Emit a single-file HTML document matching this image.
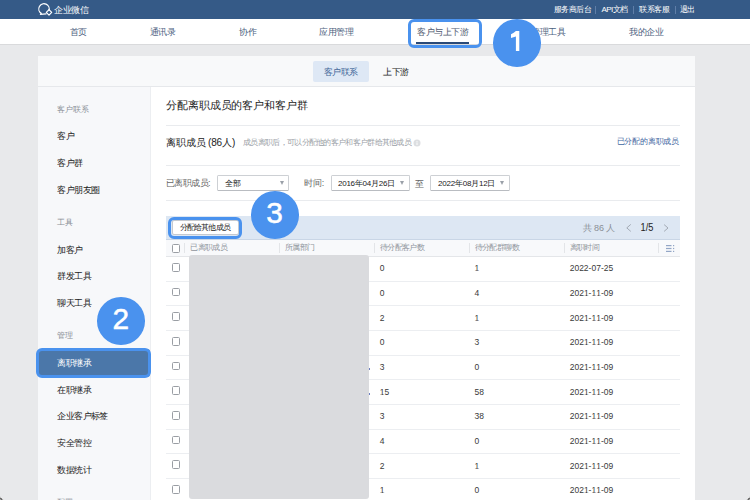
<!DOCTYPE html>
<html><head><meta charset="utf-8">
<style>
*{margin:0;padding:0;box-sizing:border-box}
html,body{width:750px;height:500px;overflow:hidden}
body{position:relative;background:#e8e9eb;font-family:"Liberation Sans",sans-serif;color:#333}
.a{position:absolute}
.t{position:absolute;white-space:nowrap;line-height:1;transform-origin:0 0}
.hl{position:absolute;border:3.1px solid #4a92ee;border-radius:6px}
.circ{position:absolute;width:47.7px;height:47.7px;border-radius:50%;background:#4a92ee}
.arr{position:absolute;width:0;height:0;border-left:2.5px solid transparent;border-right:2.5px solid transparent;border-top:4px solid #9aa0a8}
.one{display:inline-block;clip-path:polygon(0 0,100% 0,100% 78%,61% 78%,61% 100%,44% 100%,44% 78%,0 78%)}
.cb{position:absolute;left:172px;width:8px;height:8.8px;border:1px solid #9a9ea4;border-radius:1.5px;background:#fff}
</style></head><body>
<div class="a" style="left:0px;top:0px;width:750px;height:18.5px;background:#355a87;"></div>
<svg class="a" style="left:34px;top:1px" width="24" height="17" viewBox="0 0 24 17">
<path d="M14.9 9.6A5.2 5.2 0 1 0 7.2 12.3L6.4 13.3L12.1 12.9" stroke="#fff" stroke-width="1.2" fill="none" stroke-linecap="round" stroke-linejoin="round"/>
<path d="M15 8.7L17.7 11.4L15 14.1L12.3 11.4Z" stroke="#fff" stroke-width="1.2" fill="none" stroke-linejoin="round"/>
</svg>
<div class="t" style="left:54px;top:5.5px;font-size:9px;letter-spacing:-0.35px;color:#fff;font-weight:500">企业微信</div>
<div class="t" style="left:554px;top:6.2px;font-size:8px;letter-spacing:-0.6px;color:#fff;">服务商后台</div>
<div class="t" style="left:601.6px;top:6.2px;font-size:8px;letter-spacing:-0.6px;color:#fff;">API文档</div>
<div class="t" style="left:639.4px;top:6.2px;font-size:8px;letter-spacing:-0.6px;color:#fff;">联系客服</div>
<div class="t" style="left:680px;top:6.2px;font-size:8px;letter-spacing:-0.6px;color:#fff;">退出</div>
<div class="a" style="left:595.4px;top:6px;width:0.8px;height:7.7px;background:#5f7ea8;"></div>
<div class="a" style="left:633px;top:6px;width:0.8px;height:7.7px;background:#5f7ea8;"></div>
<div class="a" style="left:675px;top:6px;width:0.8px;height:7.7px;background:#5f7ea8;"></div>
<div class="a" style="left:0px;top:18.5px;width:750px;height:25.5px;background:#fff;"></div>
<div class="a" style="left:0px;top:44px;width:750px;height:1px;background:#d9dadc;"></div>
<div class="t" style="left:69.8px;top:28px;font-size:9px;letter-spacing:-0.5px;color:#4d5f80;">首页</div>
<div class="t" style="left:149.8px;top:28px;font-size:9px;letter-spacing:-0.5px;color:#4d5f80;">通讯录</div>
<div class="t" style="left:239.2px;top:28px;font-size:9px;letter-spacing:-0.5px;color:#4d5f80;">协作</div>
<div class="t" style="left:319.2px;top:28px;font-size:9px;letter-spacing:-0.5px;color:#4d5f80;">应用管理</div>
<div class="t" style="left:531px;top:28px;font-size:9px;letter-spacing:-0.5px;color:#4d5f80;">管理工具</div>
<div class="t" style="left:629.2px;top:28px;font-size:9px;letter-spacing:-0.5px;color:#4d5f80;">我的企业</div>
<div class="t" style="left:417px;top:27.5px;font-size:9px;letter-spacing:-0.5px;color:#505a70;">客户与上下游</div>
<div class="a" style="left:416px;top:42px;width:53px;height:1.8px;background:#2a4a78;"></div>
<div class="a" style="left:38px;top:56px;width:657px;height:460px;background:#fff;"></div>
<div class="a" style="left:38px;top:56px;width:657px;height:30.5px;background:#f8f9fa;border-bottom:1px solid #e6e8eb"></div>
<div class="a" style="left:313px;top:60.8px;width:56px;height:20.8px;background:#dee8f5;border-radius:2px"></div>
<div class="t" style="left:323.6px;top:67.6px;font-size:9px;letter-spacing:-0.4px;color:#45689a;">客户联系</div>
<div class="t" style="left:383px;top:67.6px;font-size:9px;letter-spacing:-0.4px;color:#222;">上下游</div>
<div class="a" style="left:38px;top:87px;width:113px;height:420px;background:#f7f8fa;border-right:1px solid #eceef1"></div>
<div class="t" style="left:57.4px;top:105.6px;font-size:8px;letter-spacing:-0.1px;color:#8a8f96;">客户联系</div>
<div class="t" style="left:57.4px;top:218.7px;font-size:8px;letter-spacing:-0.1px;color:#8a8f96;">工具</div>
<div class="t" style="left:57.4px;top:332.3px;font-size:8px;letter-spacing:-0.1px;color:#8a8f96;">管理</div>
<div class="t" style="left:57.4px;top:499px;font-size:8px;letter-spacing:-0.1px;color:#8a8f96;">配置</div>
<div class="t" style="left:57.4px;top:132.25px;font-size:9px;letter-spacing:-0.6px;color:#222;">客户</div>
<div class="t" style="left:57.4px;top:159px;font-size:9px;letter-spacing:-0.6px;color:#222;">客户群</div>
<div class="t" style="left:57.4px;top:185.7px;font-size:9px;letter-spacing:-0.6px;color:#222;">客户朋友圈</div>
<div class="t" style="left:57.4px;top:245.6px;font-size:9px;letter-spacing:-0.6px;color:#222;">加客户</div>
<div class="t" style="left:57.4px;top:272px;font-size:9px;letter-spacing:-0.6px;color:#222;">群发工具</div>
<div class="t" style="left:57.4px;top:298.6px;font-size:9px;letter-spacing:-0.6px;color:#222;">聊天工具</div>
<div class="t" style="left:57.4px;top:385.8px;font-size:9px;letter-spacing:-0.6px;color:#222;">在职继承</div>
<div class="t" style="left:57.4px;top:412px;font-size:9px;letter-spacing:-0.6px;color:#222;">企业客户标签</div>
<div class="t" style="left:57.4px;top:439px;font-size:9px;letter-spacing:-0.6px;color:#222;">安全管控</div>
<div class="t" style="left:57.4px;top:465.7px;font-size:9px;letter-spacing:-0.6px;color:#222;">数据统计</div>
<div class="a" style="left:38px;top:349px;width:112px;height:28px;background:#4b77a9;border-radius:3px"></div>
<div class="t" style="left:57.4px;top:358.6px;font-size:9px;letter-spacing:-0.6px;color:#fff;">离职继承</div>
<div class="t" style="left:166px;top:100px;font-size:11px;letter-spacing:-0.1px;color:#222;">分配离职成员的客户和客户群</div>
<div class="a" style="left:166px;top:125px;width:514px;height:1px;background:#e9ebee;"></div>
<div class="t" style="left:166px;top:138.3px;font-size:10px;letter-spacing:-0.15px;color:#222;">离职成员 (86人)</div>
<div class="t" style="left:243.2px;top:139px;font-size:8px;letter-spacing:-0.7px;color:#9aa0a6;">成员离职后，可以分配他的客户和客户群给其他成员</div>
<svg class="a" style="left:413px;top:139px" width="8" height="8" viewBox="0 0 8 8"><circle cx="4" cy="4" r="3.5" fill="#dcdee1"/><rect x="3.55" y="3.4" width="0.9" height="2.6" fill="#fff"/><rect x="3.55" y="2" width="0.9" height="0.9" fill="#fff"/></svg>
<div class="t" style="left:616.7px;top:138.3px;font-size:8px;letter-spacing:-0.2px;color:#3d64a0;">已分配的离职成员</div>
<div class="a" style="left:166px;top:165px;width:514px;height:1px;background:#e9ebee;"></div>
<div class="t" style="left:166px;top:179px;font-size:9px;letter-spacing:-0.6px;color:#666;">已离职成员:</div>
<div class="a" style="left:217.2px;top:175.2px;width:72.1px;height:15.4px;background:#fff;border:1px solid #cdd0d4;border-bottom-color:#b9bcc1;border-radius:1.5px"></div>
<div class="t" style="left:225px;top:179.6px;font-size:8px;letter-spacing:-0.4px;color:#222;">全部</div>
<div class="arr" style="left:280px;top:181px"></div>
<div class="t" style="left:304.4px;top:179px;font-size:9px;letter-spacing:-0.3px;color:#666;">时间:</div>
<div class="a" style="left:331px;top:175.2px;width:78.5px;height:15.4px;background:#fff;border:1px solid #cdd0d4;border-bottom-color:#b9bcc1;border-radius:1.5px"></div>
<div class="t" style="left:338px;top:180px;font-size:8px;letter-spacing:-0.25px;color:#222;">20<span class="one">1</span>6年04月26日</div>
<div class="arr" style="left:400px;top:181px"></div>
<div class="t" style="left:415.3px;top:179.5px;font-size:9px;letter-spacing:0px;color:#666;">至</div>
<div class="a" style="left:430.2px;top:175.2px;width:79.6px;height:15.4px;background:#fff;border:1px solid #cdd0d4;border-bottom-color:#b9bcc1;border-radius:1.5px"></div>
<div class="t" style="left:437.9px;top:180px;font-size:8px;letter-spacing:-0.2px;color:#222;">2022年08月<span class="one">1</span>2日</div>
<div class="arr" style="left:500px;top:181px"></div>
<div class="a" style="left:166px;top:200px;width:514px;height:1px;background:#e9ebee;"></div>
<div class="a" style="left:166px;top:216px;width:514px;height:24px;background:#dde7f3;border-bottom:1px solid #c9d6e6"></div>
<div class="a" style="left:172px;top:220px;width:67px;height:15px;background:#fff;border:1px solid #c5c9cf;border-radius:2px"></div>
<div class="t" style="left:179.6px;top:223.8px;font-size:8px;letter-spacing:-0.8px;color:#222;">分配给其他成员</div>
<div class="t" style="left:582.7px;top:223.8px;font-size:9px;letter-spacing:-0.1px;color:#8a8f96;">共 86 人</div>
<svg class="a" style="left:620px;top:220px" width="55" height="16" viewBox="620 220 55 16"><path d="M630.8 224.4L626.8 227.9L630.8 231.4M664.1 224.6L668 228L664.1 231.4" fill="none" stroke="#9ca3ad" stroke-width="0.9"/></svg>
<div class="t" style="left:640.6px;top:223.2px;font-size:9.3px;letter-spacing:0px;color:#222;transform:scaleY(1.1);"><span class="one">1</span>/5</div>
<div class="a" style="left:166px;top:240px;width:514px;height:16.5px;background:#f8f9fb;border-bottom:1px solid #e4e6e9"></div>
<div class="cb" style="top:244px"></div>
<div class="a" style="left:184px;top:243px;width:1px;height:10px;background:#e3e5e8;"></div>
<div class="a" style="left:278.6px;top:243px;width:1px;height:10px;background:#e3e5e8;"></div>
<div class="a" style="left:373.8px;top:243px;width:1px;height:10px;background:#e3e5e8;"></div>
<div class="a" style="left:468.8px;top:243px;width:1px;height:10px;background:#e3e5e8;"></div>
<div class="a" style="left:563.6px;top:243px;width:1px;height:10px;background:#e3e5e8;"></div>
<div class="a" style="left:658.2px;top:243px;width:1px;height:10px;background:#e3e5e8;"></div>
<div class="t" style="left:190.3px;top:243.9px;font-size:8px;letter-spacing:-0.6px;color:#8f949b;">已离职成员</div>
<div class="t" style="left:284.8px;top:243.9px;font-size:8px;letter-spacing:-0.6px;color:#8f949b;">所属部门</div>
<div class="t" style="left:379.8px;top:243.9px;font-size:8px;letter-spacing:-0.6px;color:#8f949b;">待分配客户数</div>
<div class="t" style="left:474.5px;top:243.9px;font-size:8px;letter-spacing:-0.6px;color:#8f949b;">待分配群聊数</div>
<div class="t" style="left:569.7px;top:243.9px;font-size:8px;letter-spacing:-0.6px;color:#8f949b;">离职时间</div>
<svg class="a" style="left:665.6px;top:245.3px" width="9" height="7" viewBox="0 0 9 7">
<rect x="0" y="0" width="5.5" height="1.2" fill="#93a6c6"/><rect x="0" y="2.9" width="5.5" height="1.2" fill="#93a6c6"/><rect x="0" y="5.8" width="5.5" height="1.2" fill="#93a6c6"/>
<rect x="7" y="0" width="1.2" height="1.2" fill="#93a6c6"/><rect x="7" y="2.9" width="1.2" height="1.2" fill="#93a6c6"/><rect x="7" y="5.8" width="1.2" height="1.2" fill="#93a6c6"/>
</svg>
<div class="cb" style="top:262.8px"></div>
<div class="t" style="left:379.8px;top:263.14px;font-size:8.5px;letter-spacing:0px;color:#3a3a3a;transform:scaleY(1.12);">0</div>
<div class="t" style="left:474.5px;top:263.14px;font-size:8.5px;letter-spacing:0px;color:#3a3a3a;transform:scaleY(1.12);"><span class="one">1</span></div>
<div class="t" style="left:569.7px;top:263.14px;font-size:8.5px;letter-spacing:0px;color:#3a3a3a;transform:scaleY(1.12);">2022-07-25</div>
<div class="a" style="left:166px;top:280.7px;width:514px;height:1px;background:#eceef1;"></div>
<div class="cb" style="top:287.5px"></div>
<div class="t" style="left:379.8px;top:287.82px;font-size:8.5px;letter-spacing:0px;color:#3a3a3a;transform:scaleY(1.12);">0</div>
<div class="t" style="left:474.5px;top:287.82px;font-size:8.5px;letter-spacing:0px;color:#3a3a3a;transform:scaleY(1.12);">4</div>
<div class="t" style="left:569.7px;top:287.82px;font-size:8.5px;letter-spacing:0px;color:#3a3a3a;transform:scaleY(1.12);">202<span class="one">1</span>-<span class="one">1</span><span class="one">1</span>-09</div>
<div class="a" style="left:166px;top:305.4px;width:514px;height:1px;background:#eceef1;"></div>
<div class="cb" style="top:312.2px"></div>
<div class="t" style="left:379.8px;top:312.5px;font-size:8.5px;letter-spacing:0px;color:#3a3a3a;transform:scaleY(1.12);">2</div>
<div class="t" style="left:474.5px;top:312.5px;font-size:8.5px;letter-spacing:0px;color:#3a3a3a;transform:scaleY(1.12);"><span class="one">1</span></div>
<div class="t" style="left:569.7px;top:312.5px;font-size:8.5px;letter-spacing:0px;color:#3a3a3a;transform:scaleY(1.12);">202<span class="one">1</span>-<span class="one">1</span><span class="one">1</span>-09</div>
<div class="a" style="left:166px;top:330.0px;width:514px;height:1px;background:#eceef1;"></div>
<div class="cb" style="top:336.9px"></div>
<div class="t" style="left:379.8px;top:337.18px;font-size:8.5px;letter-spacing:0px;color:#3a3a3a;transform:scaleY(1.12);">0</div>
<div class="t" style="left:474.5px;top:337.18px;font-size:8.5px;letter-spacing:0px;color:#3a3a3a;transform:scaleY(1.12);">3</div>
<div class="t" style="left:569.7px;top:337.18px;font-size:8.5px;letter-spacing:0px;color:#3a3a3a;transform:scaleY(1.12);">202<span class="one">1</span>-<span class="one">1</span><span class="one">1</span>-09</div>
<div class="a" style="left:166px;top:354.7px;width:514px;height:1px;background:#eceef1;"></div>
<div class="cb" style="top:361.6px"></div>
<div class="t" style="left:379.8px;top:361.86px;font-size:8.5px;letter-spacing:0px;color:#3a3a3a;transform:scaleY(1.12);">3</div>
<div class="t" style="left:474.5px;top:361.86px;font-size:8.5px;letter-spacing:0px;color:#3a3a3a;transform:scaleY(1.12);">0</div>
<div class="t" style="left:569.7px;top:361.86px;font-size:8.5px;letter-spacing:0px;color:#3a3a3a;transform:scaleY(1.12);">202<span class="one">1</span>-<span class="one">1</span><span class="one">1</span>-09</div>
<div class="a" style="left:166px;top:379.4px;width:514px;height:1px;background:#eceef1;"></div>
<div class="cb" style="top:386.2px"></div>
<div class="t" style="left:379.8px;top:386.54px;font-size:8.5px;letter-spacing:0px;color:#3a3a3a;transform:scaleY(1.12);"><span class="one">1</span>5</div>
<div class="t" style="left:474.5px;top:386.54px;font-size:8.5px;letter-spacing:0px;color:#3a3a3a;transform:scaleY(1.12);">58</div>
<div class="t" style="left:569.7px;top:386.54px;font-size:8.5px;letter-spacing:0px;color:#3a3a3a;transform:scaleY(1.12);">202<span class="one">1</span>-<span class="one">1</span><span class="one">1</span>-09</div>
<div class="a" style="left:166px;top:404.1px;width:514px;height:1px;background:#eceef1;"></div>
<div class="cb" style="top:410.9px"></div>
<div class="t" style="left:379.8px;top:411.22px;font-size:8.5px;letter-spacing:0px;color:#3a3a3a;transform:scaleY(1.12);">3</div>
<div class="t" style="left:474.5px;top:411.22px;font-size:8.5px;letter-spacing:0px;color:#3a3a3a;transform:scaleY(1.12);">38</div>
<div class="t" style="left:569.7px;top:411.22px;font-size:8.5px;letter-spacing:0px;color:#3a3a3a;transform:scaleY(1.12);">202<span class="one">1</span>-<span class="one">1</span><span class="one">1</span>-09</div>
<div class="a" style="left:166px;top:428.8px;width:514px;height:1px;background:#eceef1;"></div>
<div class="cb" style="top:435.6px"></div>
<div class="t" style="left:379.8px;top:435.9px;font-size:8.5px;letter-spacing:0px;color:#3a3a3a;transform:scaleY(1.12);">4</div>
<div class="t" style="left:474.5px;top:435.9px;font-size:8.5px;letter-spacing:0px;color:#3a3a3a;transform:scaleY(1.12);">0</div>
<div class="t" style="left:569.7px;top:435.9px;font-size:8.5px;letter-spacing:0px;color:#3a3a3a;transform:scaleY(1.12);">202<span class="one">1</span>-<span class="one">1</span><span class="one">1</span>-09</div>
<div class="a" style="left:166px;top:453.4px;width:514px;height:1px;background:#eceef1;"></div>
<div class="cb" style="top:460.3px"></div>
<div class="t" style="left:379.8px;top:460.58px;font-size:8.5px;letter-spacing:0px;color:#3a3a3a;transform:scaleY(1.12);">2</div>
<div class="t" style="left:474.5px;top:460.58px;font-size:8.5px;letter-spacing:0px;color:#3a3a3a;transform:scaleY(1.12);"><span class="one">1</span></div>
<div class="t" style="left:569.7px;top:460.58px;font-size:8.5px;letter-spacing:0px;color:#3a3a3a;transform:scaleY(1.12);">202<span class="one">1</span>-<span class="one">1</span><span class="one">1</span>-09</div>
<div class="a" style="left:166px;top:478.1px;width:514px;height:1px;background:#eceef1;"></div>
<div class="cb" style="top:485.0px"></div>
<div class="t" style="left:379.8px;top:485.26px;font-size:8.5px;letter-spacing:0px;color:#3a3a3a;transform:scaleY(1.12);"><span class="one">1</span></div>
<div class="t" style="left:474.5px;top:485.26px;font-size:8.5px;letter-spacing:0px;color:#3a3a3a;transform:scaleY(1.12);">0</div>
<div class="t" style="left:569.7px;top:485.26px;font-size:8.5px;letter-spacing:0px;color:#3a3a3a;transform:scaleY(1.12);">202<span class="one">1</span>-<span class="one">1</span><span class="one">1</span>-09</div>
<div class="a" style="left:166px;top:502.8px;width:514px;height:1px;background:#eceef1;"></div>
<div class="a" style="left:189px;top:255.2px;width:180px;height:244.3px;background:#dadbde;border-radius:3px"></div>
<div class="a" style="left:369px;top:368px;width:1.2px;height:1.5px;background:#6d7fc0"></div>
<div class="a" style="left:369px;top:393px;width:1.2px;height:1.5px;background:#6d7fc0"></div>
<svg class="a" style="left:0;top:0" width="750" height="500"><path d="M0 496.5L1.5 498.2L3.8 500H0Z" fill="#000" stroke="#fff" stroke-width="0.8"/><path d="M750 496.5L748.5 498.2L746.2 500H750Z" fill="#000" stroke="#fff" stroke-width="0.8"/></svg>
<div class="hl" style="left:408px;top:18.9px;width:73.8px;height:28.9px"></div>
<div class="hl" style="left:36.1px;top:348.1px;width:114.6px;height:29.7px"></div>
<div class="hl" style="left:168px;top:216.8px;width:74px;height:22px"></div>
<div class="circ" style="left:493.15px;top:19.15px"></div>
<div class="circ" style="left:97.15px;top:297.05px"></div>
<div class="circ" style="left:251.05px;top:191.05px"></div>
<svg class="a" style="left:0;top:0" width="750" height="500"><path d="M515.9 31.1H519.3V50.9H515.9V36.4L511 37.9V34.3Q514 33 515.9 31.1Z" fill="#fff"/></svg>
<div class="t" style="left:112.6px;top:304.1px;font-size:29.8px;letter-spacing:0px;color:#fff;-webkit-text-stroke:0.5px #fff">2</div>
<div class="t" style="left:266.3px;top:198.2px;font-size:29.8px;letter-spacing:0px;color:#fff;-webkit-text-stroke:0.5px #fff">3</div>
</body></html>
